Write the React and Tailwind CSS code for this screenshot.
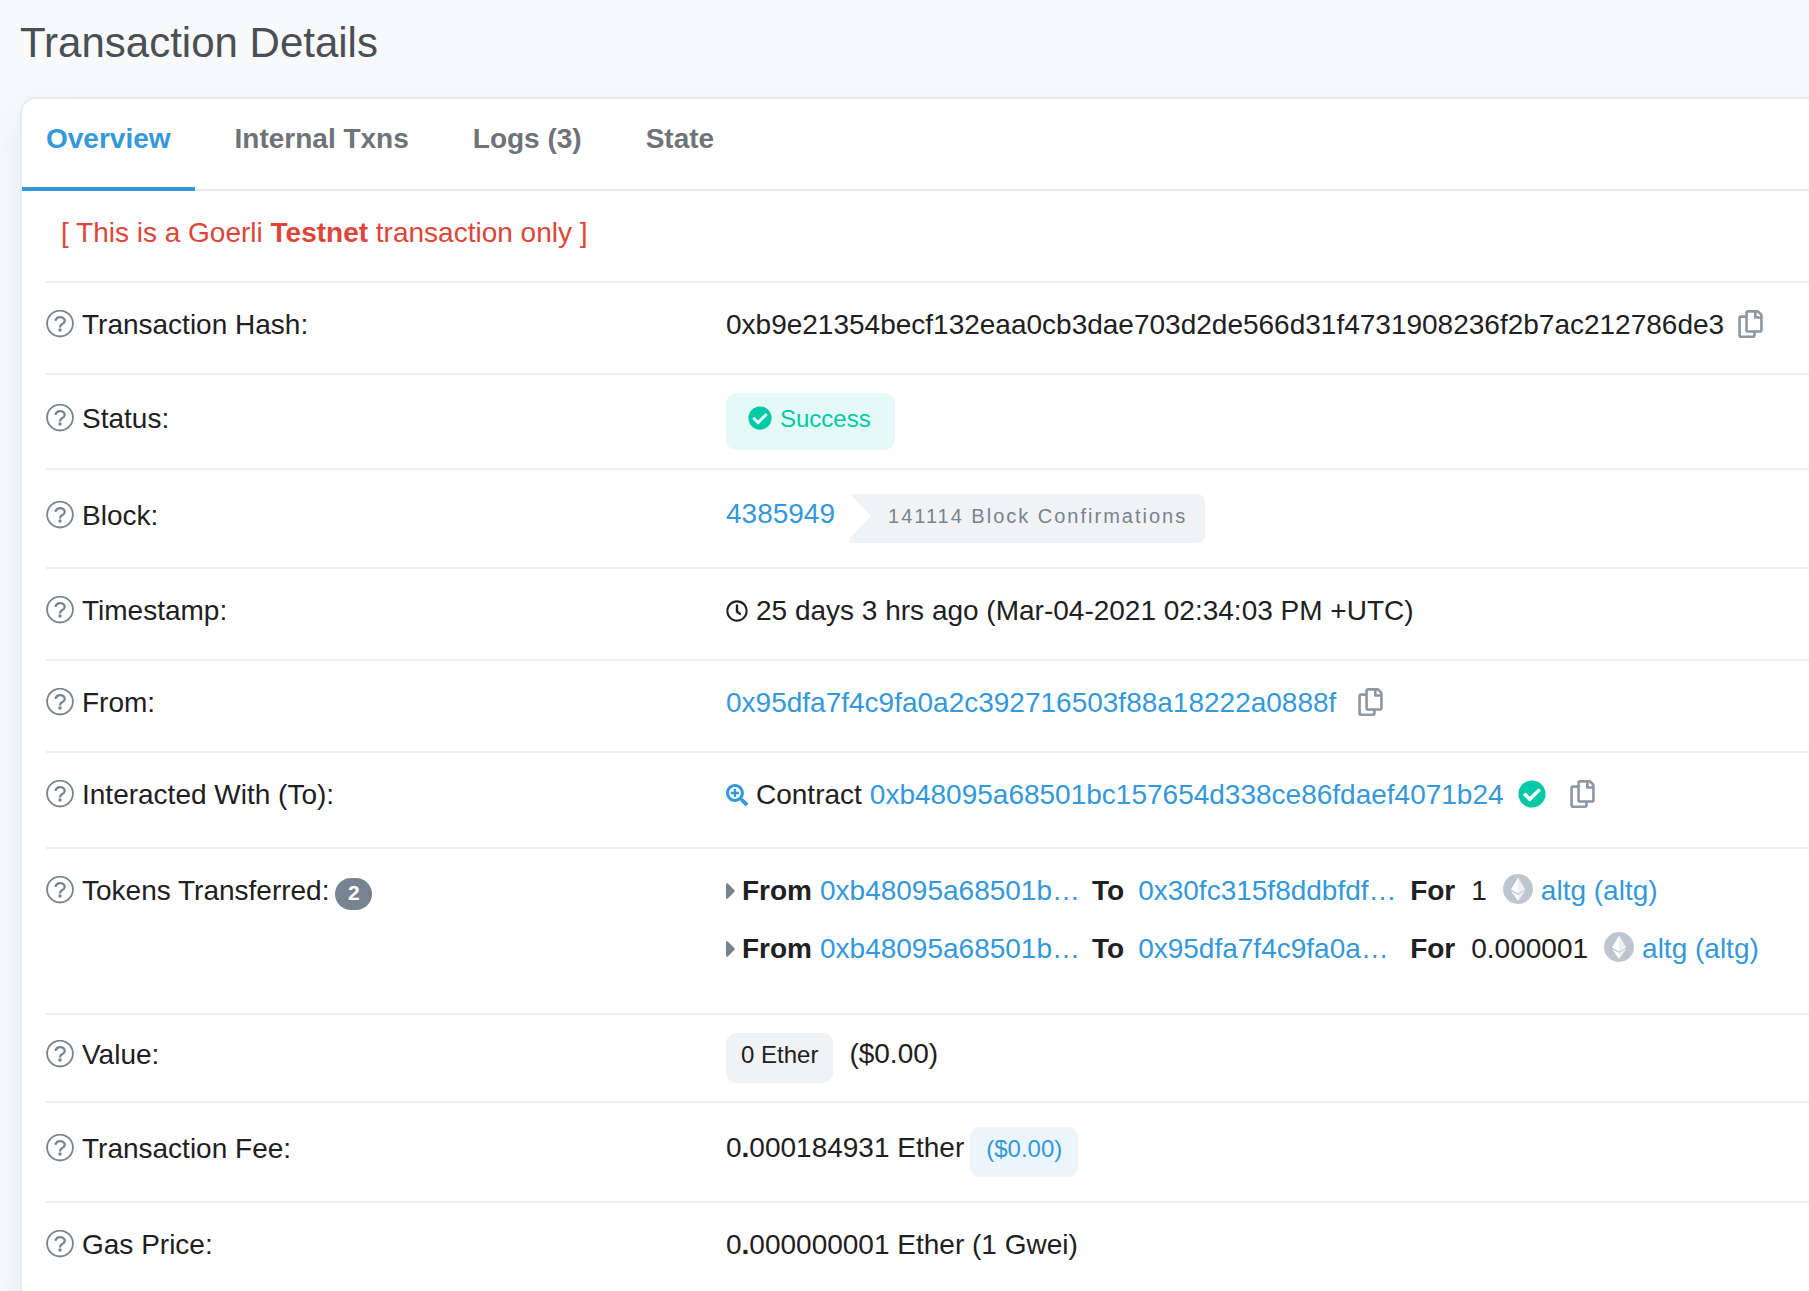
import { useState } from "react";
import {
	FaCaretRight,
	FaCheckCircle,
	FaRegClock,
	FaRegCopy,
	FaSearchPlus,
} from "react-icons/fa";

const TABS = ["Overview", "Internal Txns", "Logs (3)", "State"];

const TRANSFERS = [
	{ from: "0xb48095a68501b…", to: "0x30fc315f8ddbfdf…", amount: "1" },
	{ from: "0xb48095a68501b…", to: "0x95dfa7f4c9fa0a…", amount: "0.000001" },
];

const HelpIcon = () => (
	<svg viewBox="0 0 28 28" className="mb-0.5 h-7 w-7 shrink-0 text-[#77838f]" fill="none" stroke="currentColor">
		<circle cx="14" cy="13.600" r="12.9" strokeWidth="1.8" />
		<path
			d="M9.7 9.9C10.5 8.2 12 7.2 14 7.2c2.700 0 4.700 1.500 4.700 3.700 0 3.400-4.500 3.200-4.500 5.500v.3"
			strokeWidth="2.300"
			strokeLinecap="round"
		/>
		<circle cx="14" cy="20" r="1.700" fill="currentColor" stroke="none" />
	</svg>
);

const TokenIcon = () => (
	<svg viewBox="0 0 30 30" className="mb-1 h-[30px] w-[30px] shrink-0">
		<circle cx="15" cy="15" r="15" fill="#bdc5d1" />
		<path d="M15 3.700 8 15.500 15 19.500l7-4z" fill="#fff" />
		<path d="M15 3.700v15.800l7-4z" fill="#eff0f3" />
		<path d="M8 17 15 26.700 22 17l-7 4z" fill="#fff" />
		<path d="M15 21v5.700L22 17z" fill="#eff0f3" />
	</svg>
);

const CopyButton = ({ className = "" }) => (
	<button type="button" aria-label="Copy" className={`pt-1.5 text-[#8c98a4] ${className}`}>
		<FaRegCopy className="h-7 w-[25px]" />
	</button>
);

const Link = ({ children, className = "" }) => (
	<a href="#" className={`text-[#3498db] ${className}`}>
		{children}
	</a>
);

const Row = ({ label, count, labelClass = "pt-[21px]", valueClass = "pt-[21px] pb-[27px]", children }) => (
	<div className="grid grid-cols-[27fr_43fr] border-t-2 border-[#ebeef5]">
		<dt className={`flex items-start ${labelClass}`}>
			<span className="flex items-center gap-2">
				<HelpIcon />
				{label}
			</span>
			{count && (
				<span className="mt-2 ml-1.5 h-8 w-[37px] rounded-full bg-[#77838f] text-center text-[21px] leading-[30px] font-bold text-white">
					{count}
				</span>
			)}
		</dt>
		<dd className={`flex items-start whitespace-nowrap ${valueClass}`}>{children}</dd>
	</div>
);

const App = () => {
	const [active, setActive] = useState("Overview");

	return (
		<div className="min-h-screen overflow-hidden bg-[#f8f9fb] pl-5 font-['Liberation_Sans',Arial,sans-serif] text-[28px] leading-[42px] text-[#1e2022]">
			<h1 className="pt-3.5 pb-[25px] text-[42px] leading-[58px] text-[#4a4f55]">
				Transaction Details
			</h1>

			<main className="rounded-tl-2xl border-2 border-r-0 border-[#e7eaf3] bg-white shadow-[0_16px_38px_rgba(140,152,164,0.16)]">
				<nav className="flex gap-4 border-b-2 border-[#e7eaf3]">
					{TABS.map((tab) => (
						<button
							key={tab}
							type="button"
							onClick={() => setActive(tab)}
							className={`-mb-0.5 border-b-4 px-6 pt-[19px] pb-[27px] font-bold ${
								active === tab
									? "border-[#3498db] text-[#3498db]"
									: "border-transparent text-[#6e7379]"
							}`}>
							{tab}
						</button>
					))}
				</nav>

				<div className="pl-6">
					<p className="px-[15px] pt-[21px] pb-[27px] text-[#de4437]">
						[ This is a Goerli <b>Testnet</b> transaction only ]
					</p>

					<dl>
						<Row label="Transaction Hash:">
							0xb9e21354becf132eaa0cb3dae703d2de566d31f4731908236f2b7ac212786de3
							<CopyButton className="ml-3.5" />
						</Row>

						<Row label="Status:" labelClass="pt-[23px]" valueClass="py-[18px]">
							<span className="flex items-start gap-2 rounded-[10px] bg-[#e5faf6] pt-2 pr-6 pb-[13px] pl-[22px] text-2xl leading-9 text-[#00c9a7]">
								<FaCheckCircle className="mt-[5px] h-6 w-6" />
								Success
							</span>
						</Row>

						<Row label="Block:" labelClass="pt-[25px]" valueClass="pb-6">
							<Link className="pt-[23px]">4385949</Link>
							<span className="ml-[15px] flex pt-6">
								<svg viewBox="0 0 22 49" className="h-[49px] w-[22px]" fill="#f1f2f4">
									<path d="M0 0h22v49H0v-5l21-22z" />
								</svg>
								<span className="rounded-r-lg bg-[#f1f2f4] px-[18px] pl-4 text-xl leading-[44px] tracking-widest text-[#77838f]">
									141114 Block Confirmations
								</span>
							</span>
						</Row>

						<Row label="Timestamp:">
							<FaRegClock className="mt-2.5 mr-2 h-[22px] w-[22px]" />
							25 days 3 hrs ago (Mar-04-2021 02:34:03 PM +UTC)
						</Row>

						<Row label="From:">
							<Link>0x95dfa7f4c9fa0a2c392716503f88a18222a0888f</Link>
							<CopyButton className="ml-[22px]" />
						</Row>

						<Row label="Interacted With (To):" valueClass="pt-[21px] pb-[31px]">
							<FaSearchPlus className="mt-2.5 mr-2 h-[22px] w-[22px] text-[#3498db]" />
							<span className="mr-2">Contract</span>
							<Link>0xb48095a68501bc157654d338ce86fdaef4071b24</Link>
							<FaCheckCircle className="mt-1.5 ml-3.5 h-7 w-7 text-[#00c9a7]" />
							<CopyButton className="ml-6" />
						</Row>

						<Row label="Tokens Transferred:" count="2" valueClass="pt-[21px] pb-[43px]">
							<ul className="space-y-4">
								{TRANSFERS.map(({ from, to, amount }) => (
									<li key={to} className="flex items-center">
										<FaCaretRight className="h-7 w-2.5 text-[#77838f]" />
										<b className="ml-1.5">From</b>
										<Link className="ml-2">{from}</Link>
										<b className="ml-3">To</b>
										<Link className="ml-3.5 w-[258px]">{to}</Link>
										<b className="ml-3.5">For</b>
										<span className="mx-4">{amount}</span>
										<TokenIcon />
										<Link className="ml-2">altg (altg)</Link>
									</li>
								))}
							</ul>
						</Row>

						<Row label="Value:" labelClass="pt-[19px]" valueClass="py-[18px]">
							<span className="mr-4 rounded-[10px] bg-[#f1f2f4] px-[15px] pt-1 pb-[10px] text-2xl leading-9">
								0 Ether
							</span>
							($0.00)
						</Row>

						<Row label="Transaction Fee:" labelClass="pt-[25px]" valueClass="py-6">
							0<b>.</b>000184931 Ether
							<span className="ml-1.5 rounded-[10px] bg-[#ebf5fb] px-4 pt-1 pb-[10px] text-2xl leading-9 text-[#3498db]">
								($0.00)
							</span>
						</Row>

						<Row label="Gas Price:">
							0<b>.</b>000000001 Ether (1 Gwei)
						</Row>
					</dl>
				</div>
			</main>
		</div>
	);
};

export default App;
